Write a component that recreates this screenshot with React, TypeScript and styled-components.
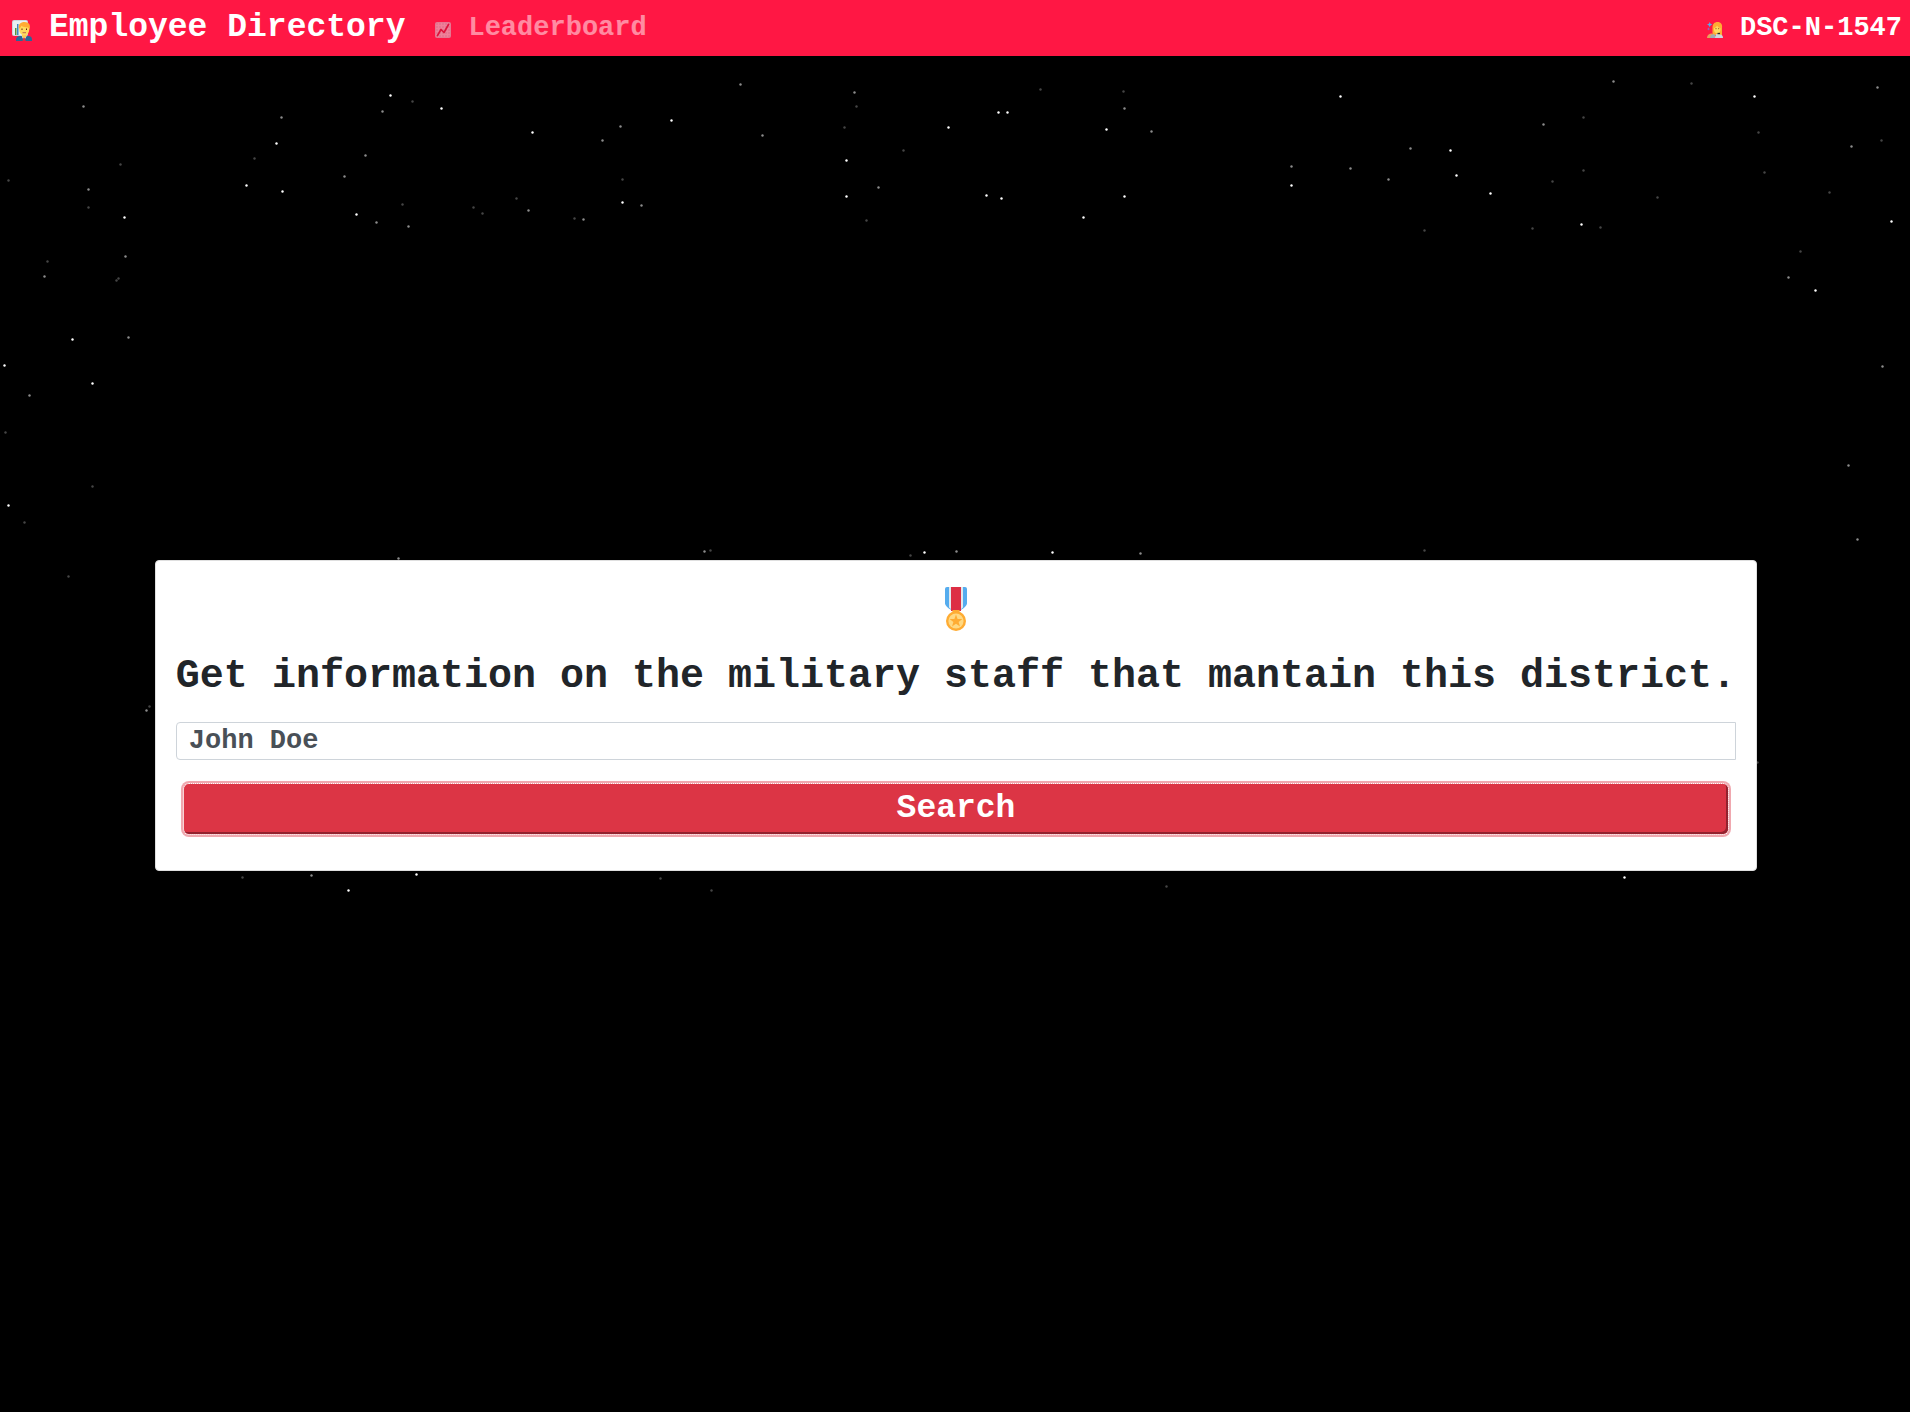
import React from "react";
import styled, { createGlobalStyle } from "styled-components";

const GlobalStyle = createGlobalStyle`
  *, *::before, *::after {
    box-sizing: border-box;
  }
  body {
    margin: 0;
    background: #000;
    color: #212529;
    font-family: "Liberation Mono", "DejaVu Sans Mono", monospace;
    font-weight: 700;
  }
`;

const Page = styled.div`
  position: relative;
  display: flex;
  flex-direction: column;
  min-height: 100vh;
`;

const Sky = styled.svg`
  position: absolute;
  inset: 0;
  width: 100%;
  height: 100%;
  pointer-events: none;
`;

const Navbar = styled.nav`
  position: relative;
  display: flex;
  align-items: center;
  justify-content: space-between;
  height: 56px;
  padding: 0 8px 0 12px;
  background: #ff1744;
`;

const NavGroup = styled.div`
  display: flex;
  align-items: center;
  gap: 30px;
`;

const NavLink = styled.a<{ $size: number; $muted?: boolean }>`
  display: flex;
  align-items: center;
  gap: 17px;
  color: #fff;
  font-size: ${(p) => p.$size}px;
  line-height: 40px;
  text-decoration: none;
  white-space: nowrap;
  opacity: ${(p) => (p.$muted ? 0.5 : 1)};

  svg {
    margin-top: 4px;
  }
`;

const Main = styled.main`
  position: relative;
  flex: 1;
  display: flex;
  align-items: center;
  justify-content: center;
  padding: 0 0 37px 2px;
`;

const Card = styled.section`
  display: flex;
  flex-direction: column;
  max-width: 100%;
  padding: 20px;
  border: 1px solid #dfdfdf;
  border-radius: 4px;
  background: #fff;
`;

const MedalBox = styled.div`
  display: flex;
  align-items: center;
  justify-content: center;
  height: 56px;
  margin-bottom: 16px;
`;

const Title = styled.h1`
  margin: 0 0 21px;
  font-size: 40px;
  line-height: 48px;
  text-align: center;
`;

const Form = styled.form`
  display: flex;
  flex-direction: column;
  gap: 24px;
  padding-bottom: 16px;
`;

const NameInput = styled.input`
  width: 100%;
  height: 38px;
  padding: 0 12px;
  border: 1px solid #ced4da;
  border-radius: 4px 0 0 4px;
  background: #fff;
  color: #495057;
  font: inherit;
  font-size: 27px;
`;

const SearchButton = styled.button`
  height: 50px;
  margin: 0 8px;
  border: 0;
  border-radius: 5px;
  background: #dc3545;
  color: #fff;
  font: inherit;
  font-size: 33px;
  line-height: 48px;
  outline: 1px dotted #fff;
  box-shadow: inset -2px -2px 0 #93222e, 0 0 0 3px #f0a8af;
`;

type Star = [number, number];

const BRIGHT: Star[] = [
  [390, 95], [441, 108], [276, 143], [532, 132], [246, 185], [282, 191], [124, 217], [356, 214],
  [622, 202], [671, 120], [948, 127], [998, 112], [1007, 112], [1106, 129], [846, 160], [846, 196],
  [986, 195], [1001, 198], [1124, 196], [1083, 217], [1340, 96], [1754, 96], [1450, 150], [1291, 185],
  [1456, 175], [1490, 193], [1891, 221], [1581, 224], [1815, 290], [72, 339], [4, 365], [92, 383],
  [8, 505], [924, 552], [1052, 552], [416, 874], [1624, 877], [348, 890],
];

const MEDIUM: Star[] = [
  [83, 106], [281, 117], [382, 111], [620, 126], [602, 140], [365, 155], [344, 176], [88, 189],
  [376, 222], [408, 226], [528, 210], [583, 219], [125, 256], [44, 276], [740, 84], [854, 92],
  [762, 135], [1124, 108], [1151, 131], [878, 187], [641, 205], [1613, 81], [1877, 87], [1543, 124],
  [1851, 146], [1410, 148], [1291, 166], [1350, 168], [1388, 179], [1788, 277], [128, 337], [29, 395],
  [398, 558], [1882, 366], [1848, 465], [1857, 539], [956, 551], [1140, 553], [704, 551], [146, 710],
  [311, 875],
];

const DIM: Star[] = [
  [412, 101], [254, 158], [120, 164], [8, 180], [88, 207], [402, 204], [473, 207], [482, 213],
  [516, 198], [574, 218], [622, 179], [47, 261], [118, 278], [116, 280], [856, 106], [844, 127],
  [1040, 89], [1123, 91], [903, 150], [866, 220], [1691, 83], [1583, 117], [1758, 132], [1881, 140],
  [1583, 170], [1552, 181], [1657, 197], [1764, 172], [1829, 192], [1600, 227], [1532, 228],
  [1424, 230], [1800, 251], [5, 432], [92, 486], [24, 522], [68, 576], [910, 555], [1424, 550],
  [710, 550], [149, 706], [1757, 762], [242, 877], [660, 878], [711, 890], [1166, 886],
];

function StarLayer({ stars, opacity }: { stars: Star[]; opacity: number }) {
  return (
    <g fill="#fff" opacity={opacity} transform="translate(0.5 0.5)">
      {stars.map(([x, y]) => (
        <circle key={`${x}-${y}`} cx={x} cy={y} r="1.2" />
      ))}
    </g>
  );
}

function TeacherIcon() {
  return (
    <svg width="20" height="21" viewBox="0 0 20 21" aria-hidden="true">
      <rect x="0" y="0" width="16" height="16" rx="2" fill="#ccd6dd" />
      <rect x="1" y="1" width="14" height="14" rx="1" fill="#e9eff3" />
      <path d="M3 8h1.5v7H3z" fill="#5c913b" />
      <path d="M5 4h1.5v11H5z" fill="#3b88c3" />
      <path d="M4 21v-1.5c0-2.5 2-3.5 4-3.5h8c2.5 0 4 1 4 3.5V21z" fill="#2a6797" />
      <path d="M9.5 15.5L12 21l2.7-5.5z" fill="#fff" />
      <path d="M11.3 17h1.6l.8 4h-3.2z" fill="#dd2e44" />
      <path d="M10 13h4.5v3.5L12 18.5l-2-2z" fill="#f9ca55" />
      <ellipse cx="12.2" cy="9.5" rx="5" ry="6" fill="#ffdc5d" />
      <path d="M7 9C6 4 8.500 2 12.500 2 17 2 19 5 17.500 9.500L16.300 7.500C13 7.500 10.500 7 9.500 5.800 9 7.500 8 8 7 9z" fill="#ffac33" />
      <path d="M10 8.500v1.500M14.500 8.500v1.500" stroke="#662113" strokeWidth="1" />
      <path d="M10.500 12.700h3.500" stroke="#c1694f" strokeWidth="1" />
    </svg>
  );
}

function ChartIcon() {
  return (
    <svg width="16" height="16" viewBox="0 0 16 16" aria-hidden="true">
      <rect width="16" height="16" rx="2" fill="#ccd6dd" />
      <path d="M3.500 1v14M6.500 1v14M9.500 1v14M12.500 1v14M1 3.500h14M1 6.500h14M1 9.500h14M1 12.500h14" stroke="#e1e8ed" strokeWidth="1" />
      <path d="M2.500 13.500l3.500-6 3 3L13.500 2.500" fill="none" stroke="#bd1133" strokeWidth="1.700" strokeLinecap="round" strokeLinejoin="round" />
    </svg>
  );
}

function SingerIcon() {
  return (
    <svg width="16" height="16" viewBox="0 0 16 16" aria-hidden="true">
      <path d="M2.700 0l.8 1.800 1.800.8-1.800.8-.8 1.900-.8-1.900L0 2.600l1.900-.8z" fill="#55acee" />
      <path d="M1.500 5.200l.5 1.200 1.200.5L2 7.400l-.5 1.200L1 7.400 0 6.900l1-.5z" fill="#9266cc" />
      <path d="M5.500 12V6C5.500 2 7.500 0 10.500 0 14 0 15.500 2.500 15 6v7H5.500z" fill="#ffac33" />
      <ellipse cx="10.200" cy="7" rx="3.300" ry="4.200" fill="#ffdc5d" />
      <path d="M6.500 6c2 0 3-1 3.500-2.500.8 1.700 2 2.500 4 2.500l-.5-3.500L10 1 7 2.700z" fill="#ffac33" />
      <path d="M9 6.200v1M11.700 6.200v1" stroke="#662113" strokeWidth=".8" />
      <path d="M0 16c0-3 2-4.500 5-4.500L9 16z" fill="#e6a35c" />
      <path d="M3 16l1-3 3-1 3 4z" fill="#a0aab3" />
      <path d="M8 16l1-4 4 .5c2 .3 3 1.200 3 3.500z" fill="#ccd6dd" />
      <path d="M10.500 11.500h2.500" stroke="#292f33" strokeWidth="1.300" />
    </svg>
  );
}

function MedalIcon() {
  return (
    <svg width="22" height="44" viewBox="0 0 22 44" role="img" aria-label="Medal">
      <path d="M2 0h18a2 2 0 0 1 2 2v14.500c0 2-4 6-7 6.500H7c-3-.5-7-4.500-7-6.500V2a2 2 0 0 1 2-2z" fill="#55acee" />
      <path d="M4 0h14v20.500l-3 2.500H7l-3-2.500z" fill="#e1e8ed" />
      <path d="M6 0h10v24H6z" fill="#dd2e44" />
      <path d="M7.500 23h7v4h-7z" fill="#ffac33" />
      <circle cx="11" cy="34" r="10" fill="#ffac33" />
      <circle cx="11" cy="34" r="7.600" fill="#ffd983" />
      <path d="M11 27.500l1.600 4.500h4.800l-3.800 2.900 1.400 4.600-4-2.800-4 2.800 1.400-4.600L4.600 32h4.800z" fill="#ffac33" />
    </svg>
  );
}

export default function App() {
  return (
    <Page>
      <GlobalStyle />
      <Sky aria-hidden="true">
        <StarLayer stars={BRIGHT} opacity={1} />
        <StarLayer stars={MEDIUM} opacity={0.55} />
        <StarLayer stars={DIM} opacity={0.27} />
      </Sky>
      <Navbar>
        <NavGroup>
          <NavLink href="#directory" $size={33}>
            <TeacherIcon />
            Employee Directory
          </NavLink>
          <NavLink href="#leaderboard" $size={27} $muted>
            <ChartIcon />
            Leaderboard
          </NavLink>
        </NavGroup>
        <NavLink href="#profile" $size={27}>
          <SingerIcon />
          DSC-N-1547
        </NavLink>
      </Navbar>
      <Main>
        <Card>
          <MedalBox>
            <MedalIcon />
          </MedalBox>
          <Title>Get information on the military staff that mantain this district.</Title>
          <Form onSubmit={(e) => e.preventDefault()}>
            <NameInput type="text" aria-label="Employee name" defaultValue="John Doe" />
            <SearchButton type="submit">Search</SearchButton>
          </Form>
        </Card>
      </Main>
    </Page>
  );
}
